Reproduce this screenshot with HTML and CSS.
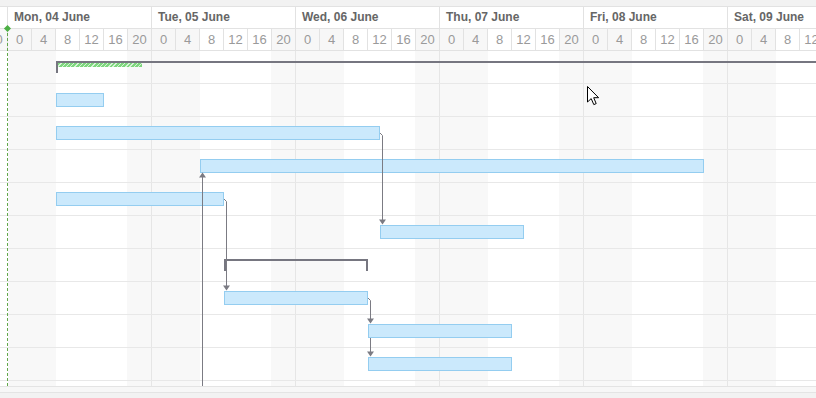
FILE: index.html
```html
<!DOCTYPE html>
<html lang="en">
<head>
    <meta charset="UTF-8">
    <meta name="viewport" content="width=device-width, initial-scale=1.0">
    <title>Gantt</title>
    <link rel="stylesheet" href="styles.css">
</head>
<body>
    <div class="gantt">
        <div class="scale">
            <div class="timeline">
                <!-- previous day, scrolled almost out of view -->
                <div class="day">
                    <div class="day-name"></div>
                    <div class="hours"><span class="off"></span><span class="off"></span><span></span><span></span><span></span><span class="off">20</span></div>
                </div>
                <div class="day">
                    <div class="day-name">Mon, 04 June</div>
                    <div class="hours"><span class="off">0</span><span class="off">4</span><span>8</span><span>12</span><span>16</span><span class="off">20</span></div>
                </div>
                <div class="day">
                    <div class="day-name">Tue, 05 June</div>
                    <div class="hours"><span class="off">0</span><span class="off">4</span><span>8</span><span>12</span><span>16</span><span class="off">20</span></div>
                </div>
                <div class="day">
                    <div class="day-name">Wed, 06 June</div>
                    <div class="hours"><span class="off">0</span><span class="off">4</span><span>8</span><span>12</span><span>16</span><span class="off">20</span></div>
                </div>
                <div class="day">
                    <div class="day-name">Thu, 07 June</div>
                    <div class="hours"><span class="off">0</span><span class="off">4</span><span>8</span><span>12</span><span>16</span><span class="off">20</span></div>
                </div>
                <div class="day">
                    <div class="day-name">Fri, 08 June</div>
                    <div class="hours"><span class="off">0</span><span class="off">4</span><span>8</span><span>12</span><span>16</span><span class="off">20</span></div>
                </div>
                <div class="day">
                    <div class="day-name">Sat, 09 June</div>
                    <div class="hours"><span class="off">0</span><span class="off">4</span><span>8</span><span>12</span><span>16</span><span class="off">20</span></div>
                </div>
            </div>
        </div>

        <div class="chart">
            <div class="row"><div class="summary open" style="margin-left: 56px; width: 780px;"><div class="progress" style="width: 84px;"></div></div></div>
            <div class="row"><div class="bar" style="margin-left: 56px; width: 48px;"></div></div>
            <div class="row"><div class="bar" style="margin-left: 56px; width: 324px;"></div></div>
            <div class="row"><div class="bar" style="margin-left: 200px; width: 504px;"></div></div>
            <div class="row"><div class="bar" style="margin-left: 56px; width: 168px;"></div></div>
            <div class="row"><div class="bar" style="margin-left: 380px; width: 144px;"></div></div>
            <div class="row"><div class="summary" style="margin-left: 224px; width: 144px;"></div></div>
            <div class="row"><div class="bar" style="margin-left: 224px; width: 144px;"></div></div>
            <div class="row"><div class="bar" style="margin-left: 368px; width: 144px;"></div></div>
            <div class="row"><div class="bar" style="margin-left: 368px; width: 144px;"></div></div>
            <div class="row"></div>

            <!-- dependency links, drawn in page coordinates -->
            <svg class="links" width="816" height="335" viewBox="0 51 816 335">
                <g fill="none" stroke="#7b7b83" stroke-width="1">
                    <path d="M380 133 L382.5 135.5 V220"/>
                    <path d="M224 199 L226.5 201.5 V286"/>
                    <path d="M202.5 386 V177"/>
                    <path d="M368 298 L370.5 300.5 V319"/>
                    <path d="M370.5 338 V352"/>
                </g>
                <g fill="#7b7b83">
                    <polygon points="379,219.5 386,219.5 382.5,224.5"/>
                    <polygon points="223,285.5 230,285.5 226.5,290.5"/>
                    <polygon points="199,177.5 206,177.5 202.5,172.5"/>
                    <polygon points="367,318.5 374,318.5 370.5,323.5"/>
                    <polygon points="367,351.5 374,351.5 370.5,356.5"/>
                </g>
            </svg>
        </div>

        <div class="footer"><div class="track"></div></div>

        <div class="marker"></div>

        <svg class="cursor" width="14" height="21" viewBox="0 0 14 21">
            <path d="M0.5 0.5 V16 L4.2 12.6 L6.8 18.6 L9.2 17.6 L6.7 11.7 L11.6 11.7 Z" fill="#fff" stroke="#000" stroke-width="1" stroke-linejoin="round"/>
        </svg>
    </div>
</body>
</html>
```

FILE: styles.css
```css
body {
    margin: 0;
    background: #f2f2f2;
    font-family: "Liberation Sans", Arial, sans-serif;
    overflow: hidden;
}
.gantt {
    position: relative;
    margin-top: 6px;
    border-top: 1px solid #e2e2e2;
    background: #fff;
    overflow: hidden;
}
.scale {
    overflow: hidden;
    border-bottom: 1px solid #e2e2e2;
}
.timeline {
    display: flex;
    width: 1008px;
    margin-left: -136px;
}
.day {
    width: 144px;
    flex: none;
    box-sizing: border-box;
    border-right: 1px solid #e2e2e2;
}
.day-name {
    height: 21px;
    line-height: 21px;
    padding-left: 6px;
    border-bottom: 1px solid #e2e2e2;
    font-size: 12px;
    font-weight: bold;
    color: #666;
    white-space: nowrap;
}
.hours {
    display: flex;
    height: 21px;
}
.hours span {
    width: 24px;
    box-sizing: border-box;
    border-right: 1px solid #e2e2e2;
    line-height: 21px;
    text-align: center;
    font-size: 13px;
    color: #9a9a9a;
}
.hours span:last-child {
    width: 23px;
    border-right: none;
}
.hours .off {
    background: #f7f7f7;
}
.chart {
    position: relative;
    height: 335px;
    overflow: hidden;
    background: repeating-linear-gradient(90deg,
        #f8f8f8 0 48px,
        #fff 48px 119px,
        #f8f8f8 119px 143px,
        #e6e6e6 143px 144px);
    background-position: 8px 0;
}
.row {
    height: 33px;
    box-sizing: border-box;
    padding-top: 9px;
    border-bottom: 1px solid #e8e8e8;
}
.bar {
    height: 14px;
    box-sizing: border-box;
    border: 1px solid #94cdf0;
    background: #cbe9fc;
}
.summary {
    height: 12px;
    margin-top: 1px;
    box-sizing: border-box;
    border: 2px solid #767680;
    border-bottom: none;
}
.summary.open {
    border-right: none;
}
.progress {
    height: 4px;
    background: repeating-linear-gradient(135deg, #7ed67e 0 2px, #d6f3d6 2px 3px);
}
.links {
    position: absolute;
    top: 0;
    left: 0;
}
.footer {
    height: 12px;
    box-sizing: border-box;
    border-top: 1px solid #e4e4e4;
    background: #f2f2f2;
}
.track {
    height: 5px;
    border-bottom: 1px solid #e4e4e4;
    background: #f7f7f7;
}
.marker {
    position: absolute;
    left: 7px;
    top: 21px;
    bottom: 12px;
    border-left: 1px dashed #62a84a;
}
.marker::before {
    content: "";
    position: absolute;
    left: -3px;
    top: -2px;
    width: 5px;
    height: 5px;
    background: #4caf44;
    transform: rotate(45deg);
}
.cursor {
    position: absolute;
    left: 587px;
    top: 79px;
}
```
